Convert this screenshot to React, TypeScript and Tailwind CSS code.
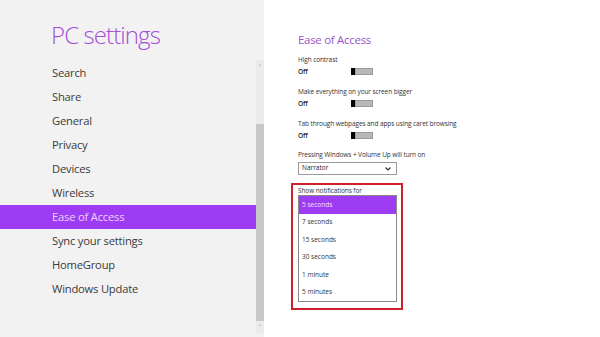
import React from "react";

const menu = [
  "Search",
  "Share",
  "General",
  "Privacy",
  "Devices",
  "Wireless",
  "Ease of Access",
  "Sync your settings",
  "HomeGroup",
  "Windows Update",
];

const toggles = [
  "High contrast",
  "Make everything on your screen bigger",
  "Tab through webpages and apps using caret browsing",
];

const durations = ["5 seconds", "7 seconds", "15 seconds", "30 seconds", "1 minute", "5 minutes"];

function Toggle() {
  return (
    <div className="flex h-[7px] w-[22px]">
      <div className="h-full w-[4px] bg-black" />
      <div className="h-full flex-1 border border-[#9a9a9a] bg-[#b8b8b8]" />
    </div>
  );
}

export default function App() {
  return (
    <div
      className="flex h-[337px] w-[600px] overflow-hidden bg-white"
      style={{ fontFamily: '"Open Sans", "Noto Sans", sans-serif' }}
    >
      {/* Left pane */}
      <div className="flex w-[264px] bg-[#f2f2f2]">
        <div className="flex w-[256px] flex-col">
          <div className="h-[61px] pl-[51px] pt-[20px] text-[24px] font-light leading-[30px] tracking-[-0.9px] text-[#a24fd6]">
            PC settings
          </div>
          {menu.map((m) => (
            <div
              key={m}
              className={
                "flex h-[24px] items-center pl-[52px] text-[11.2px] tracking-[-0.2px] " +
                (m === "Ease of Access" ? "bg-[#9e3cf3] text-[#ecd2ff]" : "text-[#3a3a3a]")
              }
            >
              {m}
            </div>
          ))}
        </div>
        <div className="mt-[60px] mb-[4px] flex w-[8px] flex-col items-center bg-[#ebebeb]">
          <div className="flex h-[14px] items-center text-[7px] leading-none text-[#555]">˄</div>
          <div className="mt-[50px] w-full flex-1 bg-[#c8c8c8]" />
          <div className="flex h-[12px] items-center text-[7px] leading-none text-[#555]">˅</div>
        </div>
      </div>

      {/* Right pane */}
      <div className="flex flex-1 flex-col pl-[34px] pt-[32px]">
        <div className="h-[16px] text-[11.5px] leading-[16px] tracking-[-0.3px] text-[#9b55cc]">Ease of Access</div>
        <div className="mt-[7px] flex flex-col">
          {toggles.map((t) => (
            <div key={t} className="flex h-[32px] flex-col">
              <div className="h-[9px] text-[6.5px] leading-[9px] tracking-[-0.1px] text-[#333]">{t}</div>
              <div className="mt-[2px] flex h-[11px] items-center">
                <div className="w-[53px] text-[6.5px] font-semibold leading-[9px] text-[#222]">Off</div>
                <Toggle />
              </div>
            </div>
          ))}
        </div>
        <div className="mt-[-1px] h-[9px] text-[6.5px] leading-[9px] tracking-[-0.1px] text-[#333]">
          Pressing Windows + Volume Up will turn on
        </div>
        <div className="mt-[3px] flex h-[13px] w-[99px] items-center justify-between border border-[#9a9a9a] bg-white pl-[3px] pr-[5px]">
          <span className="text-[6.5px] leading-none text-[#222]">Narrator</span>
          <svg width="6" height="4" viewBox="0 0 6 4">
            <path d="M0.5 0.5 L3 3 L5.5 0.5" fill="none" stroke="#333" strokeWidth="1.2" />
          </svg>
        </div>
        <div className="ml-[-7px] mt-[8px] w-[112px] border-2 border-[#d0202c] pb-[6px] pl-[5px] pr-[4px] pt-[1px]">
          <div className="h-[9px] text-[6.5px] leading-[9px] tracking-[-0.1px] text-[#333]">Show notifications for</div>
          <div className="border border-[#8a8a8a] bg-white">
            {durations.map((d, i) => (
              <div
                key={d}
                className={
                  "flex h-[17.5px] items-center pl-[3px] text-[6.5px] leading-none " +
                  (i === 0 ? "bg-[#9e3cf3] text-[#f2e2ff]" : "text-[#333]")
                }
              >
                {d}
              </div>
            ))}
          </div>
        </div>
      </div>
    </div>
  );
}
